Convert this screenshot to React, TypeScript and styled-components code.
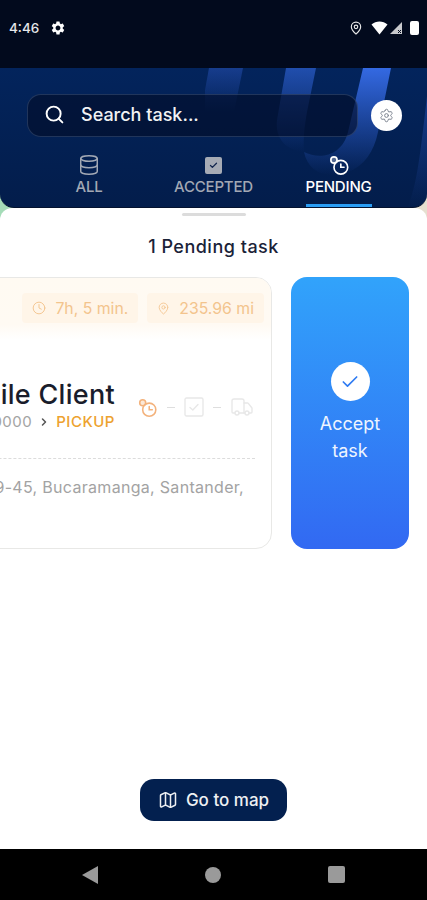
import styled, { createGlobalStyle } from "styled-components"
import { Search, Database, Map, ChevronRight, Clock, MapPin, Check, Truck, Settings } from "lucide-react"
import { MdSettings } from "react-icons/md"

const GlobalStyle = createGlobalStyle`
    html, body {
        margin: 0;
        padding: 0;
        background: #fff;
    }
    * {
        box-sizing: border-box;
    }
`

const PendingIcon = ({ size = 24, color = "currentColor" }: { size?: number; color?: string }) => (
    <svg width={size} height={size} viewBox="0 0 24 24" fill="none" stroke={color} strokeWidth="1.8" strokeLinecap="round">
        <circle cx="14" cy="14.5" r="7.5" fill="none" />
        <path d="M14 11v3.5h3.5" />
        <circle cx="6.5" cy="6.5" r="3.4" fill={color} fillOpacity="0.3" />
    </svg>
)

const CheckedBox = ({ size = 20, color = "#e8e8e8" }: { size?: number; color?: string }) => (
    <svg width={size} height={size} viewBox="0 0 20 20" fill="none" stroke={color} strokeWidth="1.4" strokeLinecap="round" strokeLinejoin="round">
        <rect x="1" y="1" width="18" height="18" rx="1.5" />
        <path d="M6 10.5l2.8 2.6L14 7.5" />
    </svg>
)

const App = () => {
    return (
        <Screen>
            <GlobalStyle />
            <StatusBar>
                <StatusLeft>
                    <Time>4:46</Time>
                    <MdSettings size={16} color="#fff" />
                </StatusLeft>
                <StatusRight>
                    <PinIcon size={14} color="#e8e8e8" strokeWidth={2} />
                    <svg width="17" height="14" viewBox="0 0 17 14">
                        <path d="M0.5 3.5C5 -0.5 12 -0.5 16.5 3.5L8.5 13.5z" fill="#fff" />
                    </svg>
                    <svg width="14" height="14" viewBox="0 0 14 14">
                        <path d="M13 1v12H1z" fill="#c9cacd" />
                        <path d="M9 9l3 3M12 9l-3 3" stroke="#020a1d" strokeWidth="1" />
                    </svg>
                    <Battery />
                </StatusRight>
            </StatusBar>

            <Header>
                <Stripes width="222" height="140" viewBox="0 0 222 140">
                    <defs>
                        <linearGradient id="stripe" x1="0" y1="0" x2="0" y2="1">
                            <stop offset="0" stopColor="#3469e2" stopOpacity="1" />
                            <stop offset="1" stopColor="#3263d8" stopOpacity="0" />
                        </linearGradient>
                        <linearGradient id="stripeMid" x1="0" y1="0" x2="0" y2="1">
                            <stop offset="0" stopColor="#2a5cc8" stopOpacity="0.75" />
                            <stop offset="1" stopColor="#2a55bd" stopOpacity="0" />
                        </linearGradient>
                        <linearGradient id="stripeSoft" x1="0" y1="0" x2="0" y2="1">
                            <stop offset="0" stopColor="#2a55bd" stopOpacity="0.5" />
                            <stop offset="1" stopColor="#2a55bd" stopOpacity="0" />
                        </linearGradient>
                    </defs>
                    <path d="M4 0h34l-9 44H-4z" fill="url(#stripeSoft)" />
                    <path d="M81 0h30l-9 44c-2 12-4 24-3 40-19-2-29-14-27-32z" fill="url(#stripeMid)" />
                    <path d="M158 0h28l-13 64c-4 20-14 34-30 40-22 8-40 0-44-20 16 8 38 4 44-20z" fill="url(#stripe)" />
                    <path d="M222 28v112h-20c10-20 14-60 20-112z" fill="url(#stripeSoft)" />
                </Stripes>
                <SearchRow>
                    <SearchField>
                        <Search size={21} color="#fff" strokeWidth={2.2} />
                        <SearchText>Search task...</SearchText>
                    </SearchField>
                    <FilterButton>
                        <Settings size={15} color="#7d8490" strokeWidth={1.6} />
                    </FilterButton>
                </SearchRow>
                <Tabs>
                    <Tab>
                        <Database size={22} strokeWidth={1.6} />
                        <TabLabel>ALL</TabLabel>
                    </Tab>
                    <Tab>
                        <AcceptedIcon>
                            <Check size={9} color="#12264e" strokeWidth={3.4} />
                        </AcceptedIcon>
                        <TabLabel>ACCEPTED</TabLabel>
                    </Tab>
                    <Tab $active>
                        <PendingIcon size={22} />
                        <TabLabel>PENDING</TabLabel>
                    </Tab>
                </Tabs>
            </Header>

            <Sheet>
                <Grip />
                <Title>1 Pending task</Title>
                <TaskRow>
                    <TaskCard>
                        <CardTop>
                            <InfoPill>
                                <Clock size={14} strokeWidth={1.6} />
                                7h, 5 min.
                            </InfoPill>
                            <InfoPill>
                                <MapPin size={13} strokeWidth={1.6} />
                                235.96 mi
                            </InfoPill>
                        </CardTop>
                        <CardMain>
                            <ClientInfo>
                                <ClientName>Mobile Client</ClientName>
                                <OrderLine>
                                    #100000
                                    <ChevronRight size={12} color="#555" strokeWidth={3} />
                                    <Stage>PICKUP</Stage>
                                </OrderLine>
                            </ClientInfo>
                            <Progress>
                                <PendingIcon size={21} color="#f3b27c" />
                                <Dash />
                                <CheckedBox />
                                <Dash />
                                <Truck size={24} color="#e8e8e8" strokeWidth={1.4} />
                            </Progress>
                        </CardMain>
                        <Divider />
                        <Address>Cra. 29-45, Bucaramanga, Santander,</Address>
                    </TaskCard>
                    <AcceptCard>
                        <AcceptCircle>
                            <Check size={20} color="#2f7bf2" strokeWidth={2} />
                        </AcceptCircle>
                        <AcceptLabel>Accept task</AcceptLabel>
                    </AcceptCard>
                </TaskRow>
                <MapButton>
                    <Map size={20} strokeWidth={1.8} />
                    Go to map
                </MapButton>
            </Sheet>

            <NavBar>
                <BackTriangle />
                <HomeDot />
                <RecentSquare />
            </NavBar>
        </Screen>
    )
}

export default App

const Screen = styled.div`
    width: 427px;
    height: 900px;
    display: flex;
    flex-direction: column;
    overflow: hidden;
    font-family: "Inter", "Noto Sans", sans-serif;
    background: linear-gradient(90deg, #a5dcb8 0 50%, #e6e0d0 50% 100%);
`
const StatusBar = styled.div`
    height: 68px;
    flex: none;
    background: #020a1d;
    display: flex;
    justify-content: space-between;
    align-items: flex-start;
    padding: 19px 8px 0 9px;
    color: #e6e7ea;
`
const StatusLeft = styled.div`
    display: flex;
    align-items: center;
    gap: 11px;
`
const Time = styled.span`
    font-size: 13.5px;
    font-weight: 500;
    line-height: 18px;
`
const StatusRight = styled.div`
    display: flex;
    align-items: center;
    gap: 1px;
    height: 18px;
`
const PinIcon = styled(MapPin)`
    margin-right: 7px;
`
const Battery = styled.span`
    width: 9px;
    height: 14px;
    margin-left: 6px;
    border-radius: 2px;
    background: #fff;
`
const Header = styled.header`
    position: relative;
    flex: none;
    height: 140px;
    padding: 26px 0 0 27px;
    display: flex;
    flex-direction: column;
    overflow: hidden;
    border-radius: 0 0 14px 14px;
    background: linear-gradient(180deg, #03245c 0%, #031d4b 100%);
    border-bottom: 1px solid #04122e;
`
const Stripes = styled.svg`
    position: absolute;
    top: 0;
    right: 0;
`
const SearchRow = styled.div`
    position: relative;
    display: flex;
    align-items: center;
    gap: 13px;
`
const SearchField = styled.div`
    width: 331px;
    height: 43px;
    display: flex;
    align-items: center;
    gap: 16px;
    padding: 0 0 2px 16px;
    border: 1px solid rgba(120, 140, 180, 0.28);
    border-radius: 14px;
    background: rgba(2, 12, 38, 0.6);
`
const SearchText = styled.span`
    color: #f1f2f4;
    font-size: 18px;
    font-weight: 500;
`
const FilterButton = styled.div`
    width: 31px;
    height: 31px;
    display: flex;
    align-items: center;
    justify-content: center;
    border-radius: 50%;
    background: #fff;
`
const Tabs = styled.nav`
    position: relative;
    display: grid;
    grid-template-columns: 124px 125px 125px;
    margin-top: 12px;
`
const Tab = styled.div<{ $active?: boolean }>`
    position: relative;
    height: 58px;
    display: flex;
    flex-direction: column;
    align-items: center;
    padding-top: 5px;
    gap: 1px;
    color: ${(props) => (props.$active ? "#ffffff" : "#a2a8b4")};

    &::after {
        content: "";
        display: ${(props) => (props.$active ? "block" : "none")};
        position: absolute;
        left: 30px;
        bottom: 0;
        width: 66px;
        height: 3px;
        background: #2a9df4;
    }
`
const TabLabel = styled.span`
    font-size: 15px;
    font-weight: 500;
    line-height: 20px;
    letter-spacing: -0.2px;
`
const AcceptedIcon = styled.span`
    width: 17px;
    height: 17px;
    margin: 3px 0 2px;
    display: flex;
    align-items: center;
    justify-content: center;
    border-radius: 2px;
    background: #a6abb5;
`
const Sheet = styled.main`
    flex: 1;
    display: flex;
    flex-direction: column;
    align-items: center;
    padding-bottom: 28px;
    border-radius: 12px 12px 0 0;
    background: #fff;
`
const Grip = styled.div`
    width: 64px;
    height: 3px;
    margin-top: 5px;
    border-radius: 2px;
    background: #dcdcdc;
`
const Title = styled.h1`
    margin: 19px 0 0;
    color: #1a2238;
    font-size: 18px;
    font-weight: 500;
    line-height: 24px;
    letter-spacing: 0.5px;
`
const TaskRow = styled.div`
    align-self: flex-start;
    display: flex;
    gap: 19px;
    height: 272px;
    margin: 18px 0 0 -103px;
`
const TaskCard = styled.article`
    width: 375px;
    display: flex;
    flex-direction: column;
    overflow: hidden;
    border: 1px solid #e8e8e6;
    border-radius: 16px;
    background: #fff;
`
const CardTop = styled.div`
    height: 62px;
    flex: none;
    display: flex;
    justify-content: flex-end;
    gap: 9px;
    padding: 15px 7px 0 0;
    background: linear-gradient(180deg, #fffaf2 0%, #fffaf3 75%, #ffffff 100%);
`
const InfoPill = styled.div`
    height: 30px;
    display: flex;
    align-items: center;
    gap: 9px;
    padding: 0 10px;
    border-radius: 4px;
    background: #fff5e8;
    color: #f3c48d;
    font-size: 15.8px;
    white-space: nowrap;
`
const CardMain = styled.div`
    display: flex;
    align-items: center;
    justify-content: flex-end;
    gap: 22px;
    padding: 42px 17px 0 0;
`
const ClientInfo = styled.div`
    display: flex;
    flex-direction: column;
    align-items: flex-end;
`
const ClientName = styled.div`
    color: #191d2b;
    font-size: 27px;
    font-weight: 500;
    line-height: 26px;
    letter-spacing: 0.3px;
    white-space: nowrap;
`
const OrderLine = styled.div`
    display: flex;
    align-items: center;
    gap: 6px;
    margin-top: 4px;
    color: #a4a4a4;
    font-size: 15px;
    line-height: 20px;
    letter-spacing: 0.5px;
`
const Stage = styled.span`
    color: #eda22f;
    font-weight: 500;
`
const Progress = styled.div`
    display: flex;
    align-items: center;
    gap: 9px;
`
const Dash = styled.span`
    width: 8px;
    height: 1px;
    background: #dedede;
`
const Divider = styled.div`
    height: 0;
    margin: 26px 16px 0;
    border-top: 1px dashed #dcdcdc;
`
const Address = styled.p`
    display: flex;
    justify-content: flex-end;
    margin: 18px 27px 0 0;
    color: #a3a3a3;
    font-size: 16px;
    line-height: 20px;
    letter-spacing: 0.3px;
    white-space: nowrap;
`
const AcceptCard = styled.button`
    width: 118px;
    display: flex;
    flex-direction: column;
    align-items: center;
    justify-content: center;
    gap: 9px;
    padding: 0;
    border: none;
    border-radius: 16px;
    background: linear-gradient(180deg, #31a3fb 0%, #3269f2 100%);
    font-family: inherit;
`
const AcceptCircle = styled.span`
    width: 39px;
    height: 39px;
    display: flex;
    align-items: center;
    justify-content: center;
    border-radius: 50%;
    background: #fff;
`
const AcceptLabel = styled.span`
    width: 70px;
    color: #eef5ff;
    font-size: 18px;
    font-weight: 400;
    line-height: 27px;
    text-align: center;
`
const MapButton = styled.button`
    margin-top: auto;
    width: 147px;
    height: 42px;
    display: flex;
    align-items: center;
    justify-content: center;
    gap: 8px;
    border: none;
    border-radius: 14px;
    background: #03204f;
    color: #eef0f3;
    font-family: inherit;
    font-size: 17px;
    font-weight: 500;
`
const NavBar = styled.div`
    height: 51px;
    flex: none;
    display: flex;
    align-items: center;
    justify-content: space-between;
    padding: 0 82px;
    background: #000;
`
const BackTriangle = styled.span`
    width: 0;
    height: 0;
    border-top: 9px solid transparent;
    border-bottom: 9px solid transparent;
    border-right: 16px solid #9a9a9a;
`
const HomeDot = styled.span`
    width: 16px;
    height: 16px;
    border-radius: 50%;
    background: #9a9a9a;
`
const RecentSquare = styled.span`
    width: 17px;
    height: 17px;
    border-radius: 2px;
    background: #9a9a9a;
`
